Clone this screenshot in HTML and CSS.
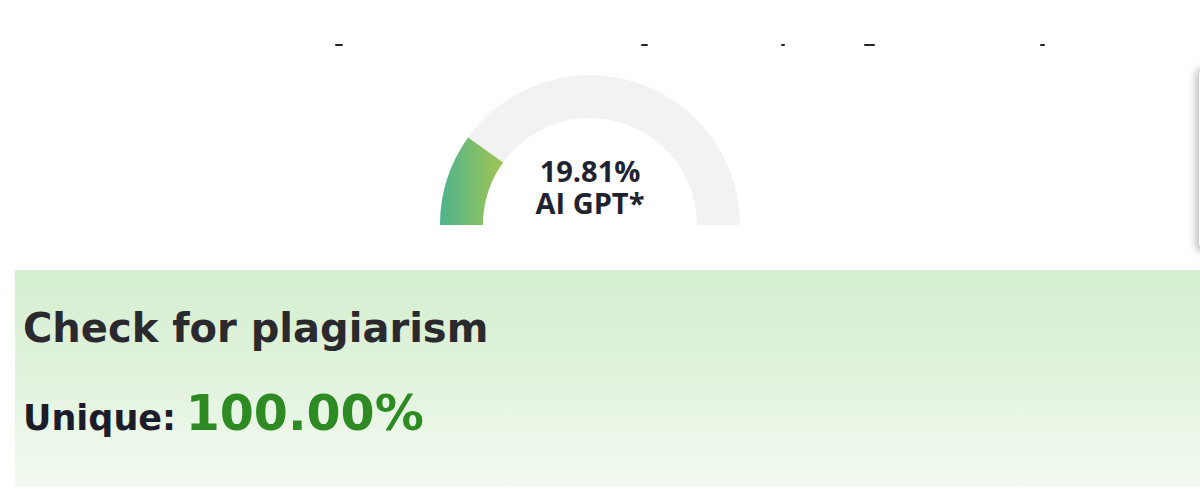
FILE: index.html
```html
<!DOCTYPE html>
<html lang="en">
<head>
<meta charset="utf-8">
<title>AI check</title>
<link rel="stylesheet" href="styles.css">
</head>
<body>
<div class="top">
  <div class="main">
    <div class="ticks">
      <span class="tick t1"></span>
      <span class="tick t2"></span>
      <span class="tick t3"></span>
      <span class="tick t4"></span>
      <span class="tick t5"></span>
    </div>
    <div class="gauge">
      <svg class="gauge-svg" width="300" height="150" viewBox="0 0 300 150">
        <defs>
          <linearGradient id="gg" x1="0" y1="0" x2="64" y2="0" gradientUnits="userSpaceOnUse">
            <stop offset="0" stop-color="#4db48c"/>
            <stop offset="1" stop-color="#a3c553"/>
          </linearGradient>
        </defs>
        <path d="M0 150 A150 150 0 0 1 300 150 L257 150 A107 107 0 0 0 43 150 Z" fill="#f2f2f2"/>
        <path d="M0 150 A150 150 0 0 1 28.1 62.55 L63.06 87.62 A107 107 0 0 0 43 150 Z" fill="url(#gg)"/>
      </svg>
      <div class="gauge-label">
        <div class="gauge-line">19.81%</div>
        <div class="gauge-line">AI GPT*</div>
      </div>
    </div>
  </div>
  <div class="side-card"></div>
</div>
<section class="result">
  <h2 class="result-title">Check for plagiarism</h2>
  <p class="unique"><span class="unique-label">Unique:</span> <span class="unique-value">100.00%</span></p>
</section>
</body>
</html>
```
FILE: styles.css
```css
html, body {
  margin: 0;
  padding: 0;
  background: #ffffff;
}
body {
  width: 1200px;
  height: 489px;
  overflow: hidden;
}
.top {
  display: flex;
  height: 270px;
}
.main {
  width: 1198px;
  flex-shrink: 0;
  display: flex;
  flex-direction: column;
}
.ticks {
  display: flex;
  padding-top: 44px;
  height: 2px;
}
.tick {
  display: block;
  height: 2px;
  background: #24222a;
  border-radius: 1px;
}
.t1 { margin-left: 335px; width: 8px; }
.t2 { margin-left: 298px; width: 7px; }
.t3 { margin-left: 133px; width: 4px; }
.t4 { margin-left: 79px; width: 11px; }
.t5 { margin-left: 165px; width: 5px; }
.gauge {
  margin-top: 29px;
  margin-left: 440px;
  width: 300px;
  height: 150px;
  display: grid;
}
.gauge-svg {
  grid-area: 1 / 1;
  display: block;
}
.gauge-label {
  grid-area: 1 / 1;
  align-self: end;
  margin-bottom: 6px;
  text-align: center;
  font-family: "Open Sans", "Noto Sans", sans-serif;
  font-weight: 700;
  font-size: 29px;
  color: #1f2230;
}
.gauge-line {
  height: 32px;
  line-height: 32px;
  overflow: visible;
}
.side-card {
  flex-shrink: 0;
  width: 40px;
  height: 182px;
  margin-top: 67px;
  background: #ffffff;
  border: 1px solid #cfcfcf;
  border-radius: 8px;
  box-shadow: -2px 1px 8px rgba(0, 0, 0, 0.28);
}
.result {
  margin-left: 15px;
  height: 217px;
  padding: 35px 0 0 8px;
  box-sizing: border-box;
  background: linear-gradient(to bottom, #d3eecf 0%, #e2f3de 50%, #f3faf1 100%);
  font-family: "DejaVu Sans", Verdana, sans-serif;
  font-weight: 700;
}
.result-title {
  margin: 0;
  font-size: 40px;
  font-weight: 700;
  color: #2a2a2e;
}
.unique {
  margin: 34px 0 0;
  color: #1c1c2a;
}
.unique-label {
  font-size: 35px;
}
.unique-value {
  margin-left: 4px;
  font-size: 49px;
  color: #2e8a22;
}
```
